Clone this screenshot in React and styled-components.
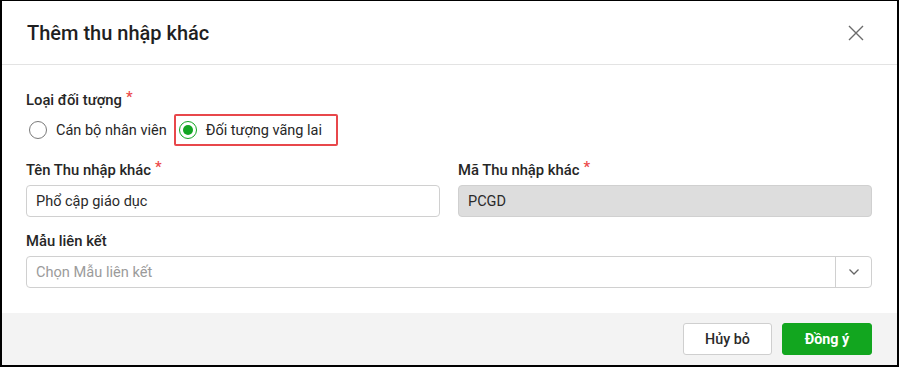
import React, { useState } from "react";
import styled, { createGlobalStyle } from "styled-components";

const GlobalStyle = createGlobalStyle`
  html, body {
    margin: 0;
    padding: 0;
    background: #fff;
  }
  body {
    font-family: Roboto, "Noto Sans", "Liberation Sans", sans-serif;
    color: #222;
  }
  * {
    box-sizing: border-box;
  }
`;

const Modal = styled.div`
  width: 899px;
  height: 367px;
  border-style: solid;
  border-color: #000;
  border-width: 1px 2px 2px 2px;
  background: #fff;
  display: flex;
  flex-direction: column;
`;

const Header = styled.div`
  height: 64px;
  flex-shrink: 0;
  display: flex;
  align-items: center;
  justify-content: space-between;
  padding: 0 25px 0 25px;
  border-bottom: 1px solid #e3e3e3;
`;

const Title = styled.h2`
  margin: 0;
  font-size: 20px;
  font-weight: 500;
  color: #1f1f1f;
`;

const CloseBtn = styled.button`
  border: 0;
  background: none;
  padding: 0;
  width: 24px;
  height: 24px;
  display: flex;
  align-items: center;
  justify-content: center;
  cursor: pointer;
  margin-right: 4px;
`;

const Body = styled.div`
  flex: 1;
  padding: 25px 25px 0 24px;
  display: flex;
  flex-direction: column;
`;

const Label = styled.div`
  font-size: 14.8px;
  font-weight: 500;
  line-height: 20px;
  color: #262626;
  display: flex;
  gap: 4px;
  margin-bottom: ${(p) => p.$gap || 5}px;
`;

const Star = styled.span`
  color: #ec4a4a;
  font-size: 15px;
  line-height: 14px;
`;

const RadioRow = styled.div`
  display: flex;
  align-items: center;
  gap: 5px;
  height: 32px;
  margin-bottom: 14px;
`;

const RadioItem = styled.label`
  display: flex;
  align-items: center;
  gap: 9px;
  height: 32px;
  font-size: 14.5px;
  color: #262626;
  cursor: pointer;
  padding: 0 ${(p) => (p.$highlight ? 14 : 0)}px 0 ${(p) => (p.$highlight ? 3 : 1)}px;
  border: 2px solid ${(p) => (p.$highlight ? "#e8474b" : "transparent")};
  border-radius: 2px;
`;

const Circle = styled.span`
  width: 18px;
  height: 18px;
  border-radius: 50%;
  border: 1px solid ${(p) => (p.$on ? "#13a523" : "#7a7a7a")};
  display: flex;
  align-items: center;
  justify-content: center;
  &::after {
    content: "";
    width: 10px;
    height: 10px;
    border-radius: 50%;
    background: ${(p) => (p.$on ? "#13a523" : "transparent")};
  }
`;

const Grid = styled.div`
  display: grid;
  grid-template-columns: 1fr 1fr;
  column-gap: 18px;
  margin-bottom: 14px;
`;

const Field = styled.div`
  display: flex;
  flex-direction: column;
`;

const Input = styled.div`
  height: 32px;
  border: 1px solid #d0d0d0;
  border-radius: 4px;
  background: ${(p) => (p.$disabled ? "#dddddd" : "#fff")};
  display: flex;
  align-items: center;
  padding: 0 9px;
  font-size: 14.5px;
  color: #2a2a2a;
`;

const Select = styled.div`
  height: 32px;
  border: 1px solid #d0d0d0;
  border-radius: 4px;
  display: flex;
  align-items: stretch;
  font-size: 14.6px;
`;

const SelectText = styled.div`
  flex: 1;
  display: flex;
  align-items: center;
  padding: 0 9px;
  color: #9b9b9b;
`;

const SelectArrow = styled.div`
  width: 36px;
  border-left: 1px solid #d0d0d0;
  display: flex;
  align-items: center;
  justify-content: center;
`;

const Footer = styled.div`
  height: 52px;
  flex-shrink: 0;
  background: #f3f3f3;
  display: flex;
  align-items: center;
  justify-content: flex-end;
  gap: 10px;
  padding: 0 25px 0 0;
`;

const Button = styled.button`
  height: 32px;
  width: ${(p) => (p.$primary ? 90 : 89)}px;
  border-radius: 3px;
  font-family: inherit;
  font-size: 14.3px;
  font-weight: ${(p) => (p.$primary ? 700 : 500)};
  border: 1px solid ${(p) => (p.$primary ? "#12a61f" : "#cfcfcf")};
  background: ${(p) => (p.$primary ? "#12a61f" : "#fff")};
  color: ${(p) => (p.$primary ? "#fff" : "#2a2a2a")};
  cursor: pointer;
`;

export default function App() {
  const [type, setType] = useState("ngoai");

  return (
    <>
      <GlobalStyle />
      <Modal>
        <Header>
          <Title>Thêm thu nhập khác</Title>
          <CloseBtn aria-label="close">
            <svg width="16" height="16" viewBox="0 0 16 16">
              <path d="M1 1 L15 15 M15 1 L1 15" stroke="#6b6b6b" strokeWidth="1.4" fill="none" />
            </svg>
          </CloseBtn>
        </Header>

        <Body>
          <Label $gap={4}>
            Loại đối tượng <Star>*</Star>
          </Label>
          <RadioRow>
            <RadioItem onClick={() => setType("nv")}>
              <Circle $on={type === "nv"} />
              Cán bộ nhân viên
            </RadioItem>
            <RadioItem $highlight onClick={() => setType("ngoai")}>
              <Circle $on={type === "ngoai"} />
              Đối tượng vãng lai
            </RadioItem>
          </RadioRow>

          <Grid>
            <Field>
              <Label>
                Tên Thu nhập khác <Star>*</Star>
              </Label>
              <Input>Phổ cập giáo dục</Input>
            </Field>
            <Field>
              <Label>
                Mã Thu nhập khác <Star>*</Star>
              </Label>
              <Input $disabled>PCGD</Input>
            </Field>
          </Grid>

          <Field>
            <Label>Mẫu liên kết</Label>
            <Select>
              <SelectText>Chọn Mẫu liên kết</SelectText>
              <SelectArrow>
                <svg width="12" height="8" viewBox="0 0 12 8">
                  <path d="M1.5 1.5 L6 6 L10.5 1.5" stroke="#666" strokeWidth="1.3" fill="none" />
                </svg>
              </SelectArrow>
            </Select>
          </Field>
        </Body>

        <Footer>
          <Button>Hủy bỏ</Button>
          <Button $primary>Đồng ý</Button>
        </Footer>
      </Modal>
    </>
  );
}
